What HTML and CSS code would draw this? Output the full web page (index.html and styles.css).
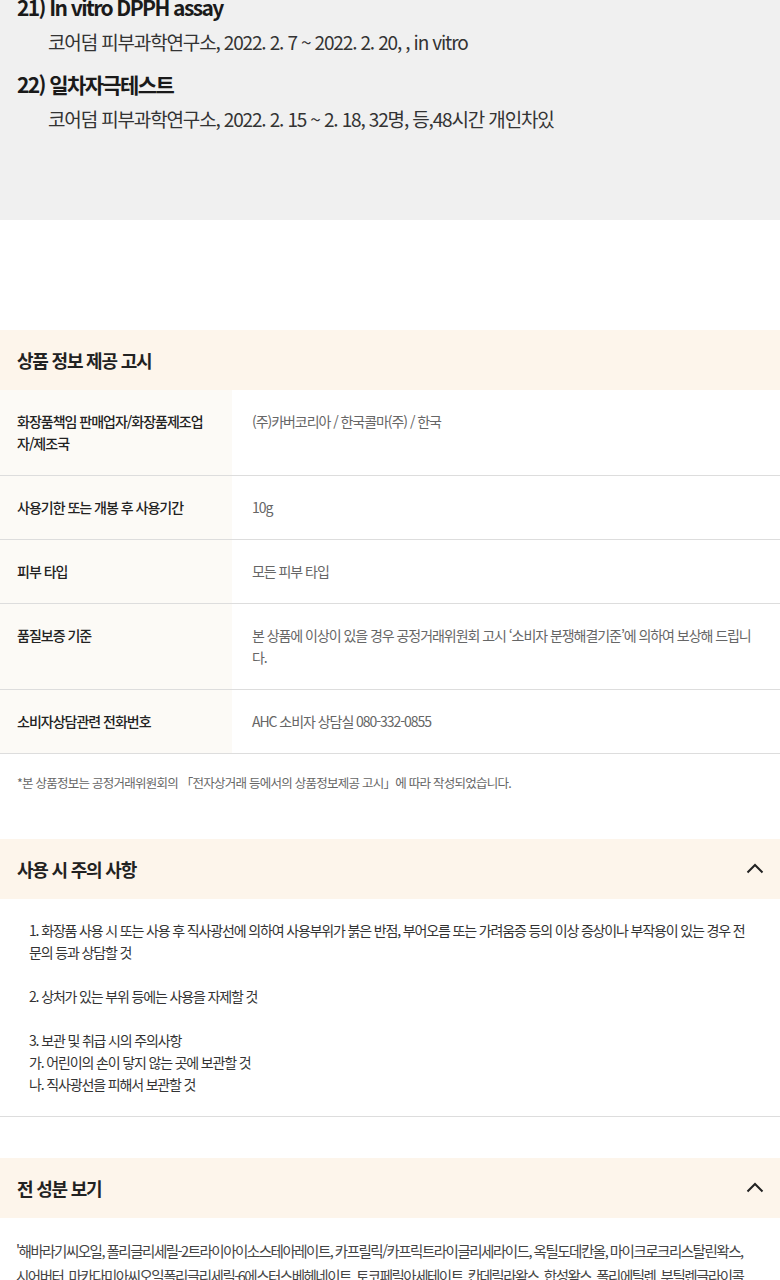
FILE: index.html
```html
<!DOCTYPE html>
<html lang="ko">
<head>
<meta charset="utf-8">
<title>상품 정보</title>
<link rel="stylesheet" href="styles.css">
</head>
<body>
<section class="tests">
  <div class="test">
    <h3 class="test-title">21) In vitro DPPH assay</h3>
    <p class="test-desc">코어덤 피부과학연구소, 2022. 2. 7 ~ 2022. 2. 20, , in vitro</p>
  </div>
  <div class="test">
    <h3 class="test-title">22) 일차자극테스트</h3>
    <p class="test-desc">코어덤 피부과학연구소, 2022. 2. 15 ~ 2. 18, 32명, 등,48시간 개인차있</p>
  </div>
</section>

<section class="block info">
  <div class="block-head"><h2>상품 정보 제공 고시</h2></div>
  <div class="info-table">
    <div class="row"><div class="th">화장품책임 판매업자/화장품제조업자/제조국</div><div class="td">(주)카버코리아 / 한국콜마(주) / 한국</div></div>
    <div class="row"><div class="th">사용기한 또는 개봉 후 사용기간</div><div class="td">10g</div></div>
    <div class="row"><div class="th">피부 타입</div><div class="td">모든 피부 타입</div></div>
    <div class="row"><div class="th">품질보증 기준</div><div class="td">본 상품에 이상이 있을 경우 공정거래위원회 고시 ‘소비자 분쟁해결기준’에 의하여 보상해 드립니다.</div></div>
    <div class="row"><div class="th">소비자상담관련 전화번호</div><div class="td">AHC 소비자 상담실 080-332-0855</div></div>
  </div>
  <p class="note">*본 상품정보는 공정거래위원회의 「전자상거래 등에서의 상품정보제공 고시」에 따라 작성되었습니다.</p>
</section>

<section class="block caution">
  <div class="block-head"><h2>사용 시 주의 사항</h2>
    <svg class="chev" width="18" height="11" viewBox="0 0 18 11"><polyline points="1.5,9.5 9,2 16.5,9.5" fill="none" stroke="#222" stroke-width="2"/></svg>
  </div>
  <div class="caution-body">
    <p>1. 화장품 사용 시 또는 사용 후 직사광선에 의하여 사용부위가 붉은 반점, 부어오름 또는 가려움증 등의 이상 증상이나 부작용이 있는 경우 전문의 등과 상담할 것</p>
    <p>2. 상처가 있는 부위 등에는 사용을 자제할 것</p>
    <p>3. 보관 및 취급 시의 주의사항<br>가. 어린이의 손이 닿지 않는 곳에 보관할 것<br>나. 직사광선을 피해서 보관할 것</p>
  </div>
</section>

<section class="block ingredients">
  <div class="block-head"><h2>전 성분 보기</h2>
    <svg class="chev" width="18" height="11" viewBox="0 0 18 11"><polyline points="1.5,9.5 9,2 16.5,9.5" fill="none" stroke="#222" stroke-width="2"/></svg>
  </div>
  <p class="ingr-body">'해바라기씨오일, 폴리글리세릴-2트라이아이소스테아레이트, 카프릴릭/카프릭트라이글리세라이드, 옥틸도데칸올, 마이크로크리스탈린왁스, 시어버터, 마카다미아씨오일폴리글리세릴-6에스터스베헤네이트, 토코페릴아세테이트, 칸데릴라왁스, 합성왁스, 폴리에틸렌, 부틸렌글라이콜</p>
</section>
</body>
</html>
```

FILE: styles.css
```css
* { box-sizing: border-box; }
html, body { margin: 0; padding: 0; background: #fff; }
body {
  font-family: "Noto Sans CJK KR", "Noto Sans", sans-serif;
  color: #222;
  width: 780px;
}
h2, h3, p { margin: 0; }

.tests {
  background: #f0f0f0;
  margin-top: -8px;
  padding: 0 0 86px 17px;
}
.test + .test { margin-top: 12px; }
.test-title {
  font-size: 21px;
  line-height: 30px;
  font-weight: 700;
  letter-spacing: -1.6px;
  color: #1a1a1a;
}
.test-desc {
  margin-top: 5px;
  padding-left: 31px;
  font-size: 19px;
  line-height: 30px;
  font-weight: 400;
  letter-spacing: -1.15px;
  color: #333;
}

.block-head {
  background: #fdf5eb;
  height: 60px;
  display: flex;
  align-items: center;
  justify-content: space-between;
  padding: 0 16px 0 17px;
}
.block-head h2 {
  font-size: 18px;
  font-weight: 700;
  letter-spacing: -1.2px;
  color: #222;
}
.chev { display: block; margin-top: -2px; }

.info { margin-top: 110px; }
.row {
  display: grid;
  grid-template-columns: 232px 1fr;
  border-bottom: 1px solid #ddd;
}
.th, .td {
  font-size: 14px;
  line-height: 22px;
  padding: 20px 16px 21px 17px;
}
.th {
  background: #fcfaf6;
  color: #222;
  font-weight: 500;
  padding-right: 24px;
  letter-spacing: -1px;
}
.td {
  color: #666;
  padding-left: 20px;
  padding-right: 22px;
  letter-spacing: -1.05px;
}
.note {
  padding: 20px 17px 0 17px;
  font-size: 12.5px;
  line-height: 18px;
  color: #666;
  letter-spacing: -0.75px;
}

.caution { margin-top: 47px; }
.caution-body {
  padding: 20px 25px 21px 29px;
  border-bottom: 1px solid #ddd;
}
.caution-body p {
  font-size: 14px;
  line-height: 22px;
  color: #333;
  letter-spacing: -1.15px;
}
.caution-body p + p { margin-top: 22px; }

.ingredients { margin-top: 41px; }
.ingr-body {
  padding: 20px 30px 20px 16px;
  font-size: 14.5px;
  line-height: 25px;
  color: #444;
  letter-spacing: -1.5px;
}
```
